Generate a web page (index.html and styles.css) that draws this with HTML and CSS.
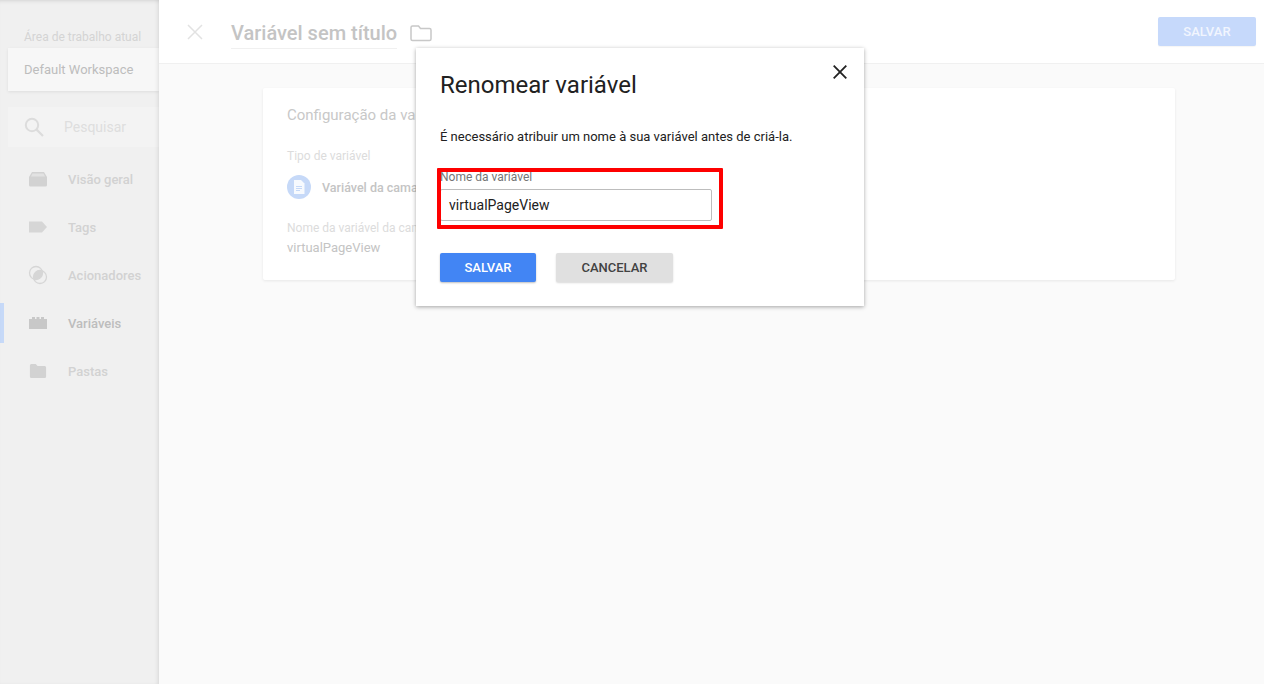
FILE: index.html
```html
<!DOCTYPE html>
<html lang="pt">
<head>
  <meta charset="UTF-8" />
  <title>Renomear variável</title>
  <link rel="stylesheet" href="styles.css">
</head>
<body>

  <div class="app">
    <!-- MENU LATERAL -->
    <aside class="sidebar">
      <div class="ws-label">Área de trabalho atual</div>
      <div class="ws-box">Default Workspace</div>
      <div class="search">
        <svg class="search-icon" width="24" height="24" viewBox="0 0 24 24"><circle cx="10" cy="10" r="6.200" fill="none" stroke="#dcdcdc" stroke-width="2"/><path d="M14.600 14.600L21 21" stroke="#dcdcdc" stroke-width="2.200" fill="none"/></svg>
        <span>Pesquisar</span>
      </div>
      <ul class="menu">
        <li>
          <svg width="20" height="16" viewBox="0 0 20 16"><path d="M4 1h12l3 5v8a1.500 1.500 0 0 1-1.500 1.500h-15A1.500 1.500 0 0 1 1 14V6z" fill="#d2d2d2"/><path d="M4.500 2.500h11l1.500 3H3z" fill="#e2e2e2"/></svg>
          <span>Visão geral</span>
        </li>
        <li>
          <svg width="20" height="16" viewBox="0 0 20 16"><path d="M1 2.500h13l5 5.500-5 5.500H1z" fill="#d6d6d6"/></svg>
          <span>Tags</span>
        </li>
        <li>
          <svg width="20" height="20" viewBox="0 0 20 20"><circle cx="8" cy="8" r="6.500" fill="none" stroke="#d6d6d6" stroke-width="1.300"/><circle cx="12" cy="12" r="6.500" fill="none" stroke="#d6d6d6" stroke-width="1.300"/><path d="M14.140 5.860A6.500 6.500 0 0 1 5.860 14.140A6.500 6.500 0 0 1 14.140 5.860z" fill="#d6d6d6"/></svg>
          <span>Acionadores</span>
        </li>
        <li class="active">
          <svg width="20" height="12" viewBox="0 0 20 12"><path d="M1 2h3V0h3v2h1.500V0h3v2H13V0h3v2h3v10H1z" fill="#c8c8c8"/></svg>
          <span>Variáveis</span>
        </li>
        <li>
          <svg width="20" height="16" viewBox="0 0 20 16"><path d="M2.500 1h5l2 2h8A1.500 1.500 0 0 1 19 4.500v9a1.500 1.500 0 0 1-1.500 1.500h-15A1.500 1.500 0 0 1 1 13.500v-11A1.500 1.500 0 0 1 2.500 1z" fill="#d2d2d2" transform="translate(1 0) scale(.9 1)"/></svg>
          <span>Pastas</span>
        </li>
      </ul>
    </aside>

    <!-- AREA PRINCIPAL -->
    <main class="main">
      <header class="topbar">
        <svg class="close-faded" width="16" height="16" viewBox="0 0 16 16"><path d="M1 1l14 14M15 1L1 15" stroke="#e2e2e2" stroke-width="1.500" fill="none"/></svg>
        <h1 class="title">Variável sem título</h1>
        <svg class="folder" width="22" height="18" viewBox="0 0 22 18"><path d="M2.500 2h6l2 2.500h9A1.500 1.500 0 0 1 21 6v9a1.500 1.500 0 0 1-1.500 1.500h-17A1.500 1.500 0 0 1 1 15V3.500A1.500 1.500 0 0 1 2.500 2z" fill="none" stroke="#c8c8c8" stroke-width="1.500"/></svg>
        <button class="btn-faded">SALVAR</button>
      </header>

      <section class="card">
        <h2>Configuração da variável</h2>
        <div class="field-label">Tipo de variável</div>
        <div class="type-row">
          <span class="type-icon">
            <svg width="12" height="14" viewBox="0 0 12 14"><path d="M1 0h7l3.500 3.500V14H1z" fill="#fff" opacity=".85"/><path d="M3 6.500h6M3 8.500h6M3 10.500h4" stroke="#c6d9f8" stroke-width="1"/></svg>
          </span>
          <span class="type-name">Variável da camada de dados</span>
        </div>
        <div class="field-label">Nome da variável da camada de dados</div>
        <div class="field-value">virtualPageView</div>
      </section>
    </main>
  </div>

  <!-- DIALOGO -->
  <div class="dialog">
    <svg class="dialog-close" width="14" height="14" viewBox="0 0 14 14"><path d="M.7.700l12.600 12.600M13.300.700L.7 13.300" stroke="#212121" stroke-width="1.800" fill="none"/></svg>
    <h2 class="dialog-title">Renomear variável</h2>
    <p class="dialog-text">É necessário atribuir um nome à sua variável antes de criá-la.</p>
    <label class="input-label">Nome da variável</label>
    <div class="input">virtualPageView</div>
    <div class="actions">
      <button class="btn btn-primary">SALVAR</button>
      <button class="btn btn-grey">CANCELAR</button>
    </div>
  </div>

  <!-- MARCACAO VERMELHA -->
  <div class="highlight"></div>

</body>
</html>
```

FILE: styles.css
```css
/* RESET & BASE */
* {
  box-sizing: border-box;
  margin: 0;
  padding: 0;
}

html, body {
  height: 100%;
  overflow: hidden;
}

body {
  font-family: Roboto, "Liberation Sans", sans-serif;
  background: #fafafa;
  color: #212121;
}

.app {
  display: flex;
  height: 684px;
}

/* MENU LATERAL */
.sidebar {
  width: 159px;
  flex-shrink: 0;
  background: #f0f0f0;
  padding-top: 30px;
  position: relative;
  overflow: hidden;
}

/* sombra da barra superior e da area principal por cima do menu */
.sidebar::after {
  content: '';
  position: absolute;
  inset: 0;
  box-shadow: inset -3px 0 4px -2px rgba(0, 0, 0, 0.1), inset 0 4px 4px -3px rgba(0, 0, 0, 0.1);
  pointer-events: none;
}

.ws-label {
  margin-left: 24px;
  font-size: 12px;
  line-height: 14px;
  color: #d4d4d4;
  white-space: nowrap;
}

.ws-box {
  margin: 4px 0 0 8px;
  height: 43px;
  background: #f7f7f7;
  box-shadow: 0 1px 3px rgba(0, 0, 0, 0.08);
  padding-left: 16px;
  font-size: 13px;
  line-height: 43px;
  color: #bdbdbd;
  white-space: nowrap;
}

.search {
  margin: 16px 0 0 8px;
  height: 40px;
  background: #f3f3f3;
  display: flex;
  align-items: center;
  padding-left: 14px;
  font-size: 14px;
  color: #dedede;
}

.search span {
  margin-left: 18px;
}

.menu {
  list-style: none;
  margin-top: 12px;
}

.menu li {
  height: 40px;
  margin-bottom: 8px;
  display: flex;
  align-items: center;
  font-size: 13px;
  font-weight: 500;
  color: #d2d2d2;
}

.menu li svg {
  margin-left: 28px;
  flex-shrink: 0;
}

.menu li span {
  position: absolute;
  left: 68px;
}

.menu li.active {
  border-left: 4px solid #c6d9f8;
  color: #bdbdbd;
}

.menu li.active svg {
  margin-left: 24px;
}

/* AREA PRINCIPAL */
.main {
  flex: 1;
  position: relative;
}

.topbar {
  height: 64px;
  background: #fff;
  border-bottom: 1px solid #f0f0f0;
  display: flex;
  align-items: center;
  padding: 0 8px 0 28px;
}

.title {
  margin-left: 28px;
  margin-top: 1px;
  height: 34px;
  padding-top: 4px;
  font-size: 20px;
  font-weight: 500;
  line-height: 29px;
  color: #c4c4c4;
  border-bottom: 1px solid #f0f0f0;
  white-space: nowrap;
}

.folder {
  margin-left: 13px;
  margin-top: 2px;
  flex-shrink: 0;
}

.btn-faded {
  margin-left: auto;
  width: 98px;
  height: 29px;
  border: none;
  border-radius: 2px;
  background: #c6d9fb;
  color: #f1f5fe;
  font-family: inherit;
  font-size: 13px;
  font-weight: 500;
  letter-spacing: 0.1px;
  box-shadow: 0 1px 1px rgba(0, 0, 0, 0.04);
}

.card {
  width: 912px;
  height: 192px;
  margin: 24px 0 0 104px;
  background: #fff;
  border-radius: 2px;
  box-shadow: 0 1px 3px rgba(0, 0, 0, 0.08);
  padding: 18px 24px;
}

.card h2 {
  font-size: 15px;
  font-weight: 400;
  line-height: 18px;
  color: #c8c8c8;
}

.field-label {
  font-size: 12px;
  line-height: 14px;
  color: #dcdcdc;
}

.card h2 + .field-label {
  margin-top: 25px;
}

.type-row {
  display: flex;
  align-items: center;
  margin: 12px 0 22px;
  height: 24px;
}

.type-icon {
  width: 24px;
  height: 24px;
  border-radius: 50%;
  background: #c6d9f8;
  display: flex;
  align-items: center;
  justify-content: center;
}

.type-name {
  margin-left: 11px;
  font-size: 12.500px;
  font-weight: 500;
  color: #c4c4c4;
  white-space: nowrap;
}

.field-value {
  margin-top: 5px;
  font-size: 13px;
  line-height: 15px;
  color: #c4c4c4;
}

/* DIALOGO */
.dialog {
  position: absolute;
  left: 416px;
  top: 48px;
  width: 448px;
  height: 258px;
  background: #fff;
  box-shadow: 0 1px 4px rgba(0, 0, 0, 0.35);
  padding: 23px 24px;
}

.dialog-close {
  position: absolute;
  top: 17px;
  right: 17px;
}

.dialog-title {
  font-size: 24px;
  font-weight: 400;
  line-height: 28px;
  color: #212121;
}

.dialog-text {
  margin-top: 30px;
  font-size: 13px;
  line-height: 16px;
  color: #212121;
}

.input-label {
  display: block;
  margin-top: 25px;
  font-size: 12px;
  line-height: 14px;
  color: #757575;
}

.input {
  width: 272px;
  height: 32px;
  margin-top: 5px;
  border: 1px solid #bdbdbd;
  border-radius: 2px;
  padding-left: 8px;
  font-size: 14px;
  line-height: 30px;
  color: #212121;
}

.actions {
  display: flex;
  gap: 20px;
  margin-top: 32px;
}

.btn {
  height: 29px;
  border: none;
  border-radius: 2px;
  font-family: inherit;
  font-size: 13px;
  font-weight: 500;
}

.btn-primary {
  width: 96px;
  background: #4285f4;
  color: #fff;
  box-shadow: 0 1px 2px rgba(0, 0, 0, 0.25);
}

.btn-grey {
  width: 117px;
  background: #e0e0e0;
  color: #424242;
  box-shadow: 0 1px 2px rgba(0, 0, 0, 0.15);
}

/* MARCACAO VERMELHA */
.highlight {
  position: absolute;
  left: 437px;
  top: 168px;
  width: 286px;
  height: 61px;
  border: 4px solid #fe0000;
  border-radius: 1px;
}
```
